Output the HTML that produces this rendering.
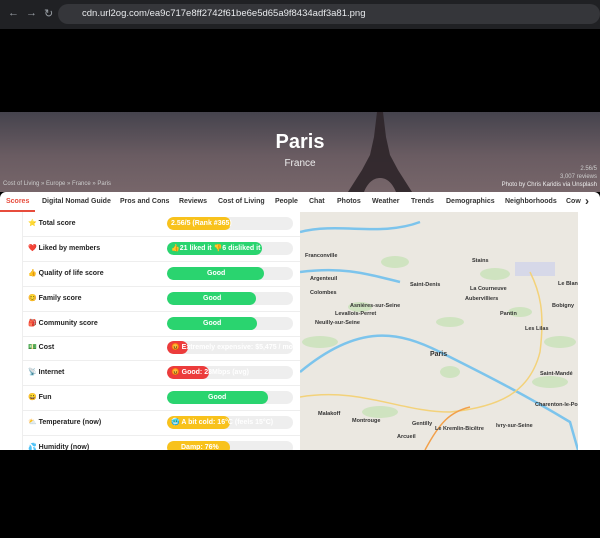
<!DOCTYPE html>
<html><head><meta charset="utf-8"><style>
*{margin:0;padding:0;box-sizing:border-box}
body{width:600px;height:538px;background:#000;font-family:"Liberation Sans","Noto Sans CJK JP",sans-serif;position:relative;overflow:hidden}
.chrome{position:absolute;left:0;top:0;width:600px;height:29px;background:#202124}
.url{position:absolute;left:58px;top:4px;width:542px;height:20px;background:#35363a;border-radius:10px;color:#e8eaed;font-size:9.5px;line-height:20px;padding-left:24px}
.nav{position:absolute;top:7px;color:#9aa0a6;font-size:11px}
.hero{position:absolute;left:0;top:112px;width:600px;height:80px;background:linear-gradient(180deg,#45434d 0%,#6a5c62 55%,#77666a 100%)}
.tower{position:absolute;left:340px;top:0;width:80px;height:80px}
.hero h1{position:absolute;left:0;width:600px;top:19px;text-align:center;color:#fff;font-size:20px;font-weight:bold}
.hero .c{position:absolute;left:0;width:600px;top:46px;text-align:center;color:#eee;font-size:10px}
.sm{position:absolute;font-size:6px;color:#ccc}
.tabs{position:absolute;left:0;top:192px;width:600px;height:20px;background:#fff;border-radius:6px 6px 0 0;font-size:7px;font-weight:bold;color:#333;white-space:nowrap}
.tabs span{position:absolute;top:6px}
.content{position:absolute;left:0;top:212px;width:600px;height:238px;background:#fff;overflow:hidden}
.vl{position:absolute;left:22px;top:0;width:1px;height:238px;background:#eee}
.row{position:absolute;left:22px;width:278px;height:25px;border-bottom:1px solid #eee}
.lab{position:absolute;left:6px;top:7px;font-size:7px;font-weight:bold;color:#222}
.bar{position:absolute;left:145px;top:5px;width:126px;height:13px;border-radius:7px;background:#eee;overflow:hidden;font-size:7px;font-weight:bold;color:#fff;line-height:13px}
.f{position:absolute;left:0;top:0;height:13px;border-radius:7px}
.t{position:absolute;left:4px;top:0;white-space:nowrap}
.g{background:#2ad46f}.y{background:#f8c21c}.r{background:#ec3c3c}
</style></head><body>
<div class="chrome"><span class="nav" style="left:8px">←</span><span class="nav" style="left:26px">→</span><span class="nav" style="left:44px">↻</span><div class="url">cdn.url2og.com/ea9c717e8ff2742f61be6e5d65a9f8434adf3a81.png</div></div>
<div class="hero">
<svg class="tower" viewBox="0 0 80 80"><path d="M37 0h6l3 25 4 18 8 15 14 22H56c-4-10-10-14-16-14s-12 4-16 14H8l14-22 8-15 4-18z" fill="#2e2529" opacity=".9"/></svg>
<h1>Paris</h1><div class="c">France</div>
<div class="sm" style="left:3px;top:69px">Cost of Living » Europe » France » Paris</div>
<div class="sm" style="right:3px;top:54px">2.56/5</div>
<div class="sm" style="right:3px;top:62px">3,007 reviews</div>
<div class="sm" style="right:3px;top:70px;color:#eee">Photo by Chris Karidis via Unsplash</div>
</div>
<div class="tabs">
<span style="left:6px;color:#e74c3c">Scores</span><div style="position:absolute;left:0;top:18px;width:35px;height:2px;background:#e74c3c"></div>
<span style="left:42px">Digital Nomad Guide</span><span style="left:120px">Pros and Cons</span><span style="left:179px">Reviews</span><span style="left:218px">Cost of Living</span><span style="left:275px">People</span><span style="left:309px">Chat</span><span style="left:337px">Photos</span><span style="left:372px">Weather</span><span style="left:411px">Trends</span><span style="left:446px">Demographics</span><span style="left:505px">Neighborhoods</span><span style="left:566px">Cow</span>
<span style="left:585px;top:2px;font-size:12px">›</span>
</div>
<div class="content">
<div class="vl"></div>
<div class="row" style="top:0"><span class="lab">⭐ Total score</span><div class="bar"><div class="f y" style="width:64px"></div><span class="t">2.56/5 (Rank #365)</span></div></div>
<div class="row" style="top:25px"><span class="lab">❤️ Liked by members</span><div class="bar"><div class="f g" style="width:95px"></div><span class="t">👍21 liked it 👎6 disliked it</span></div></div>
<div class="row" style="top:50px"><span class="lab">👍 Quality of life score</span><div class="bar"><div class="f g" style="width:97px"></div><span class="t" style="left:40px">Good</span></div></div>
<div class="row" style="top:75px"><span class="lab">😊 Family score</span><div class="bar"><div class="f g" style="width:89px"></div><span class="t" style="left:36px">Good</span></div></div>
<div class="row" style="top:100px"><span class="lab">🎒 Community score</span><div class="bar"><div class="f g" style="width:90px"></div><span class="t" style="left:36px">Good</span></div></div>
<div class="row" style="top:124px"><span class="lab">💵 Cost</span><div class="bar"><div class="f r" style="width:21px"></div><span class="t">😡 Extremely expensive: $5,475 / mo</span></div></div>
<div class="row" style="top:149px"><span class="lab">📡 Internet</span><div class="bar"><div class="f r" style="width:42px"></div><span class="t">😡 Good: 28Mbps (avg)</span></div></div>
<div class="row" style="top:174px"><span class="lab">😀 Fun</span><div class="bar"><div class="f g" style="width:101px"></div><span class="t" style="left:41px">Good</span></div></div>
<div class="row" style="top:199px"><span class="lab">⛅ Temperature (now)</span><div class="bar"><div class="f y" style="width:63px"></div><span class="t">🥶 A bit cold: 16°C (feels 15°C)</span></div></div>
<div class="row" style="top:224px"><span class="lab">💦 Humidity (now)</span><div class="bar"><div class="f y" style="width:63px"></div><span class="t" style="left:14px">Damp: 76%</span></div></div>
<svg style="position:absolute;left:300px;top:0" width="278" height="238" viewBox="0 0 278 238">
<rect width="278" height="238" fill="#ebe8e1"/>
<g fill="#cfe3c0"><ellipse cx="95" cy="50" rx="14" ry="6"/><ellipse cx="195" cy="62" rx="15" ry="6"/><ellipse cx="20" cy="130" rx="18" ry="6"/><ellipse cx="260" cy="130" rx="16" ry="6"/><ellipse cx="150" cy="160" rx="10" ry="6"/><ellipse cx="80" cy="200" rx="18" ry="6"/><ellipse cx="250" cy="170" rx="18" ry="6"/><ellipse cx="150" cy="110" rx="14" ry="5"/><ellipse cx="60" cy="95" rx="12" ry="5"/><ellipse cx="220" cy="100" rx="12" ry="5"/></g>
<rect x="215" y="50" width="40" height="14" fill="#d6d8e8"/>
<path d="M0 20 C40 10 80 25 120 10 M0 60 C40 55 60 60 100 70 M0 160 C60 110 100 120 140 140 C180 160 220 180 270 210 L278 238" stroke="#7cc4ec" stroke-width="2.5" fill="none"/>
<path d="M0 185 C60 175 100 200 150 200 C200 195 230 180 240 140 C245 100 240 80 230 60" stroke="#f3d27a" stroke-width="1.5" fill="none"/>
<path d="M125 238 C140 210 150 200 170 195" stroke="#f2a04a" stroke-width="1.5" fill="none"/>
<g font-family="Liberation Sans" font-size="5.5" font-weight="bold" fill="#333">
<text x="5" y="45">Franconville</text><text x="10" y="68">Argenteuil</text><text x="110" y="74">Saint-Denis</text><text x="10" y="82">Colombes</text><text x="50" y="95">Asnières-sur-Seine</text><text x="35" y="103">Levallois-Perret</text><text x="15" y="112">Neuilly-sur-Seine</text><text x="165" y="88">Aubervilliers</text><text x="200" y="103">Pantin</text><text x="225" y="118">Les Lilas</text><text x="258" y="73">Le Blanc-M</text><text x="252" y="95">Bobigny</text><text x="130" y="144" font-size="7">Paris</text><text x="240" y="163">Saint-Mandé</text><text x="235" y="194">Charenton-le-Pont</text><text x="18" y="203">Malakoff</text><text x="52" y="210">Montrouge</text><text x="112" y="213">Gentilly</text><text x="196" y="215">Ivry-sur-Seine</text><text x="135" y="218">Le Kremlin-Bicêtre</text><text x="97" y="226">Arcueil</text><text x="172" y="50">Stains</text><text x="170" y="78">La Courneuve</text></g>
</svg>
</div>
</body></html>
